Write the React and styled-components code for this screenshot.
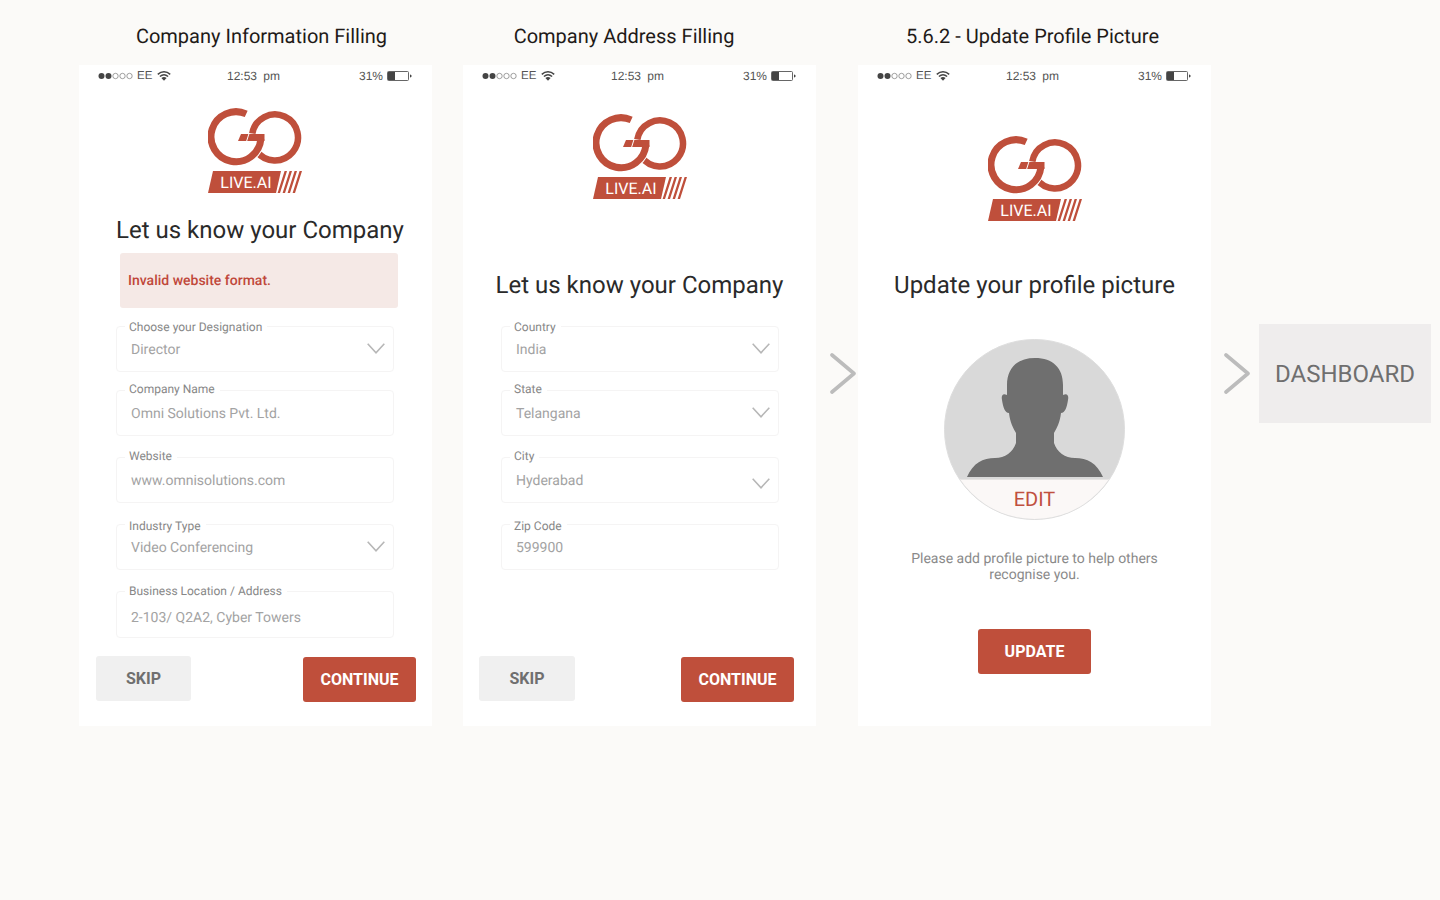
import React from 'react'
import styled, { createGlobalStyle } from 'styled-components'

const GlobalStyle = createGlobalStyle`
  * { box-sizing: border-box; }
  body {
    margin: 0;
    background: #fbfaf8;
    font-family: Roboto, "Liberation Sans", sans-serif;
    text-rendering: geometricPrecision;
  }
`

const RED = '#bf4f3b'

function StatusBar() {
  return (
    <STATUS_BAR>
      <STATUS_LEFT>
        <svg width="35" height="8" viewBox="0 0 35 8">
          <circle cx="3.5" cy="4" r="3" fill="#444" />
          <circle cx="10.5" cy="4" r="3" fill="#444" />
          <circle cx="17.5" cy="4" r="2.7" fill="none" stroke="#777" strokeWidth=".7" />
          <circle cx="24.5" cy="4" r="2.7" fill="none" stroke="#777" strokeWidth=".7" />
          <circle cx="31.5" cy="4" r="2.7" fill="none" stroke="#777" strokeWidth=".7" />
        </svg>
        <span>EE</span>
        <svg width="14" height="10" viewBox="0 0 14 10">
          <path d="M.8 3.400C4.500 0 9.500 0 13.200 3.400M2.900 5.500c2.500-2.200 5.700-2.200 8.200 0" fill="none" stroke="#444" strokeWidth="1.500" />
          <path d="M4.400 7 7 9.800 9.600 7C8 5.700 6 5.700 4.400 7z" fill="#444" />
        </svg>
      </STATUS_LEFT>
      <STATUS_TIME>12:53 pm</STATUS_TIME>
      <STATUS_RIGHT>
        <span>31%</span>
        <svg width="25" height="10" viewBox="0 0 25 10">
          <rect x=".5" y=".5" width="21" height="9" rx="1" fill="#fff" stroke="#555" strokeWidth=".9" />
          <rect x="1" y="1" width="7" height="8" fill="#444" />
          <path d="M23 3.200 25 5 23 6.800z" fill="#444" />
        </svg>
      </STATUS_RIGHT>
    </STATUS_BAR>
  )
}

function Logo({ top, nudge }) {
  return (
    <LOGO_BOX $top={top} $nudge={nudge}>
      <svg width="94" height="86" viewBox="0 0 94 86">
        <path d="M44.300 25.500A23 23 0 1 1 48.200 42.700" fill="none" stroke={RED} strokeWidth="6.500" />
        <path d="M38.200 5.900A25 25 0 1 0 52.900 31" fill="none" stroke="#fff" strokeWidth="9" />
        <path d="M38.200 5.900A25 25 0 1 0 52.900 31" fill="none" stroke={RED} strokeWidth="7" />
        <path d="M33 26H56.500V33H30z" fill={RED} />
        <path d="M41 25.500 38.500 33.500" stroke="#fff" strokeWidth="1" />
        <path d="M5 63H73L68 85H0z" fill={RED} />
        <text x="38" y="80" textAnchor="middle" fontFamily="Roboto, sans-serif" fontSize="16" fill="#fff">LIVE.AI</text>
        <path d="M76.600 63H79L72 85H69.600zM81.600 63H84L77 85H74.600zM86.600 63H89L82 85H79.600zM91.600 63H94L87 85H84.600z" fill={RED} />
      </svg>
    </LOGO_BOX>
  )
}

function Chevron({ low }) {
  return (
    <CHEVRON $low={low} width="18" height="11" viewBox="0 0 18 11">
      <path d="M.7.7 9 9.700 17.300.7" fill="none" stroke="#b7b7b7" strokeWidth="1.600" />
    </CHEVRON>
  )
}

function Field({ label, value, top, select, low, labelTop = -7, tall }) {
  return (
    <FIELD $top={top} $tall={tall}>
      <FIELD_LABEL $top={labelTop}>{label}</FIELD_LABEL>
      <FIELD_VALUE>{value}</FIELD_VALUE>
      {select && <Chevron low={low} />}
    </FIELD>
  )
}

function Actions({ left, right, skipWidth }) {
  return (
    <BUTTON_ROW $left={left} $right={right}>
      <SKIP_BUTTON $width={skipWidth}>SKIP</SKIP_BUTTON>
      <PRIMARY_BUTTON>CONTINUE</PRIMARY_BUTTON>
    </BUTTON_ROW>
  )
}

function Arrow() {
  return (
    <ARROW width="26" height="41" viewBox="0 0 26 41">
      <path d="M2 2 24 20.500 2 39" fill="none" stroke="#bcbcbc" strokeWidth="3.600" strokeLinecap="round" strokeLinejoin="round" />
    </ARROW>
  )
}

function App() {
  return (
    <PAGE>
      <GlobalStyle />

      <COLUMN>
        <TITLE $left={12}>Company Information Filling</TITLE>
        <SCREEN>
          <StatusBar />
          <Logo top={21} nudge />
          <HEADING $top={22} $left={9}>Let us know your Company</HEADING>
          <ALERT>Invalid website format.</ALERT>
          <FORM $top={18} $left={37}>
            <Field label="Choose your Designation" value="Director" select />
            <Field top={18} labelTop={-9} label="Company Name" value="Omni Solutions Pvt. Ltd." />
            <Field top={21} labelTop={-9} label="Website" value="www.omnisolutions.com" />
            <Field top={21} labelTop={-6} label="Industry Type" value="Video Conferencing" select />
            <Field top={21} labelTop={-8} tall label="Business Location / Address" value="2-103/ Q2A2, Cyber Towers" />
          </FORM>
          <Actions left={17} right={16} skipWidth={95} />
        </SCREEN>
      </COLUMN>

      <COLUMN $left={31}>
        <TITLE $right={31}>Company Address Filling</TITLE>
        <SCREEN>
          <StatusBar />
          <Logo top={27} />
          <HEADING $top={71}>Let us know your Company</HEADING>
          <FORM $top={26} $left={38}>
            <Field label="Country" value="India" select />
            <Field top={18} labelTop={-9} label="State" value="Telangana" select />
            <Field top={21} labelTop={-9} label="City" value="Hyderabad" select low />
            <Field top={21} labelTop={-6} label="Zip Code" value="599900" />
          </FORM>
          <Actions left={16} right={22} skipWidth={96} />
        </SCREEN>
      </COLUMN>

      <ARROW_SLOT $left={14} $right={2}>
        <Arrow />
      </ARROW_SLOT>

      <COLUMN>
        <TITLE $right={4}>5.6.2 - Update Profile Picture</TITLE>
        <SCREEN>
          <StatusBar />
          <Logo top={49} />
          <HEADING $top={49}>Update your profile picture</HEADING>
          <AVATAR>
            <svg width="180" height="140" viewBox="0 0 180 140">
              <path
                d="M90 19C72 19 62 29 62 46V56C58 54 56 56 57 61C58 68 60 74 64 74C65 83 68 89 71 94V104C68 113 60 119 50 119C38 119 28 124 22 138H158C152 124 142 119 130 119C120 119 112 113 109 104V94C112 89 115 83 116 74C120 74 122 68 123 61C124 56 122 54 118 56V46C118 29 108 19 90 19z"
                fill="#6f6f6f"
              />
            </svg>
            <AVATAR_EDIT>EDIT</AVATAR_EDIT>
          </AVATAR>
          <HINT>Please add profile picture to help others<br />recognise you.</HINT>
          <UPDATE_BUTTON>UPDATE</UPDATE_BUTTON>
        </SCREEN>
      </COLUMN>

      <ARROW_SLOT $left={13} $right={9}>
        <Arrow />
      </ARROW_SLOT>

      <DASHBOARD>DASHBOARD</DASHBOARD>
    </PAGE>
  )
}

export default App

const PAGE = styled.div`
display: flex;
align-items: flex-start;
min-height: 900px;
padding-left: 79px;
`
const COLUMN = styled.section`
width: 353px;
flex: none;
margin-left: ${props => props.$left || 0}px;
`
const TITLE = styled.h2`
height: 65px;
margin: 0;
padding: 7px ${props => props.$right || 0}px 0 ${props => props.$left || 0}px;
display: flex;
align-items: center;
justify-content: center;
font-size: 20px;
font-weight: 400;
color: #1f1a18;
white-space: nowrap;
`
const SCREEN = styled.div`
height: 661px;
background: #fff;
display: flex;
flex-direction: column;
padding-bottom: 24px;
`
const STATUS_BAR = styled.div`
height: 22px;
flex: none;
padding: 0 20px 0 19px;
display: grid;
grid-template-columns: 1fr auto 1fr;
align-items: center;
font-family: "Liberation Sans", sans-serif;
font-size: 12px;
color: #555;
`
const STATUS_LEFT = styled.div`
display: flex;
align-items: center;
gap: 4px;
span { font-size: 11.5px; }
svg:last-child { margin-left: 1px; }
`
const STATUS_TIME = styled.div`
word-spacing: 3px;
padding-right: 3px;
`
const STATUS_RIGHT = styled.div`
display: flex;
align-items: center;
justify-content: flex-end;
gap: 4px;
`
const LOGO_BOX = styled.div`
margin-top: ${props => props.$top}px;
padding-right: ${props => props.$nudge ? 1 : 0}px;
height: 85px;
flex: none;
display: flex;
justify-content: center;
`
const HEADING = styled.h1`
margin: ${props => props.$top}px 0 0;
padding-left: ${props => props.$left || 0}px;
height: 30px;
line-height: 30px;
text-align: center;
font-size: 24px;
font-weight: 400;
color: #2a2a2a;
white-space: nowrap;
`
const ALERT = styled.div`
margin: 8px 0 0 41px;
width: 278px;
height: 55px;
flex: none;
display: flex;
align-items: center;
padding-left: 8px;
border-radius: 3px;
background: #f5e9e6;
color: #c0473a;
font-size: 14px;
font-weight: 500;
`
const FORM = styled.div`
margin: ${props => props.$top}px 0 0 ${props => props.$left}px;
width: 278px;
`
const FIELD = styled.div`
position: relative;
height: ${props => props.$tall ? 47 : 46}px;
margin-top: ${props => props.$top || 0}px;
padding: ${props => props.$tall ? 6 : 1}px 8px 0 14px;
display: flex;
align-items: center;
justify-content: space-between;
border: 1px solid #f5f4f4;
border-radius: 4px;
`
const FIELD_LABEL = styled.span`
position: absolute;
left: 8px;
top: ${props => props.$top}px;
padding: 0 5px 0 4px;
background: #fff;
font-size: 12px;
line-height: 14px;
color: #878787;
white-space: nowrap;
`
const FIELD_VALUE = styled.span`
font-size: 14px;
color: #a3a3a3;
`
const CHEVRON = styled.svg`
position: relative;
top: ${props => props.$low ? 3 : -1}px;
`
const BUTTON_ROW = styled.div`
margin-top: auto;
padding: 0 ${props => props.$right}px 0 ${props => props.$left}px;
display: flex;
justify-content: space-between;
`
const SKIP_BUTTON = styled.button`
width: ${props => props.$width}px;
height: 45px;
margin-top: -1px;
border: none;
border-radius: 3px;
background: #f0f0f0;
color: #6f6f6f;
font-family: inherit;
font-size: 16px;
font-weight: 700;
`
const PRIMARY_BUTTON = styled.button`
width: 113px;
height: 45px;
border: none;
border-radius: 3px;
background: ${RED};
color: #fff;
font-family: inherit;
font-size: 16px;
font-weight: 700;
`
const UPDATE_BUTTON = styled(PRIMARY_BUTTON)`
margin: 46px auto 0;
`
const AVATAR = styled.div`
width: 181px;
height: 181px;
margin: 39px auto 0;
flex: none;
border-radius: 50%;
overflow: hidden;
background: #d9d9d9;
display: flex;
flex-direction: column;
border: 1px solid #dedede;
svg { flex: none; display: block; margin-top: -1px; }
`
const AVATAR_EDIT = styled.div`
flex: 1;
background: #fbf8f7;
border-top: 1px solid #e6e4e3;
padding-top: 7px;
text-align: center;
font-size: 20px;
line-height: 24px;
color: #c0503f;
`
const HINT = styled.p`
margin: 31px 0 0;
text-align: center;
font-size: 14px;
line-height: 16px;
color: #8a8a8a;
`
const ARROW_SLOT = styled.div`
flex: none;
margin: 353px ${props => props.$right}px 0 ${props => props.$left}px;
`
const ARROW = styled.svg`
display: block;
`
const DASHBOARD = styled.div`
flex: none;
width: 172px;
height: 99px;
margin-top: 324px;
display: flex;
align-items: center;
justify-content: center;
background: #efeded;
color: #6f6f6f;
font-size: 24px;
`
